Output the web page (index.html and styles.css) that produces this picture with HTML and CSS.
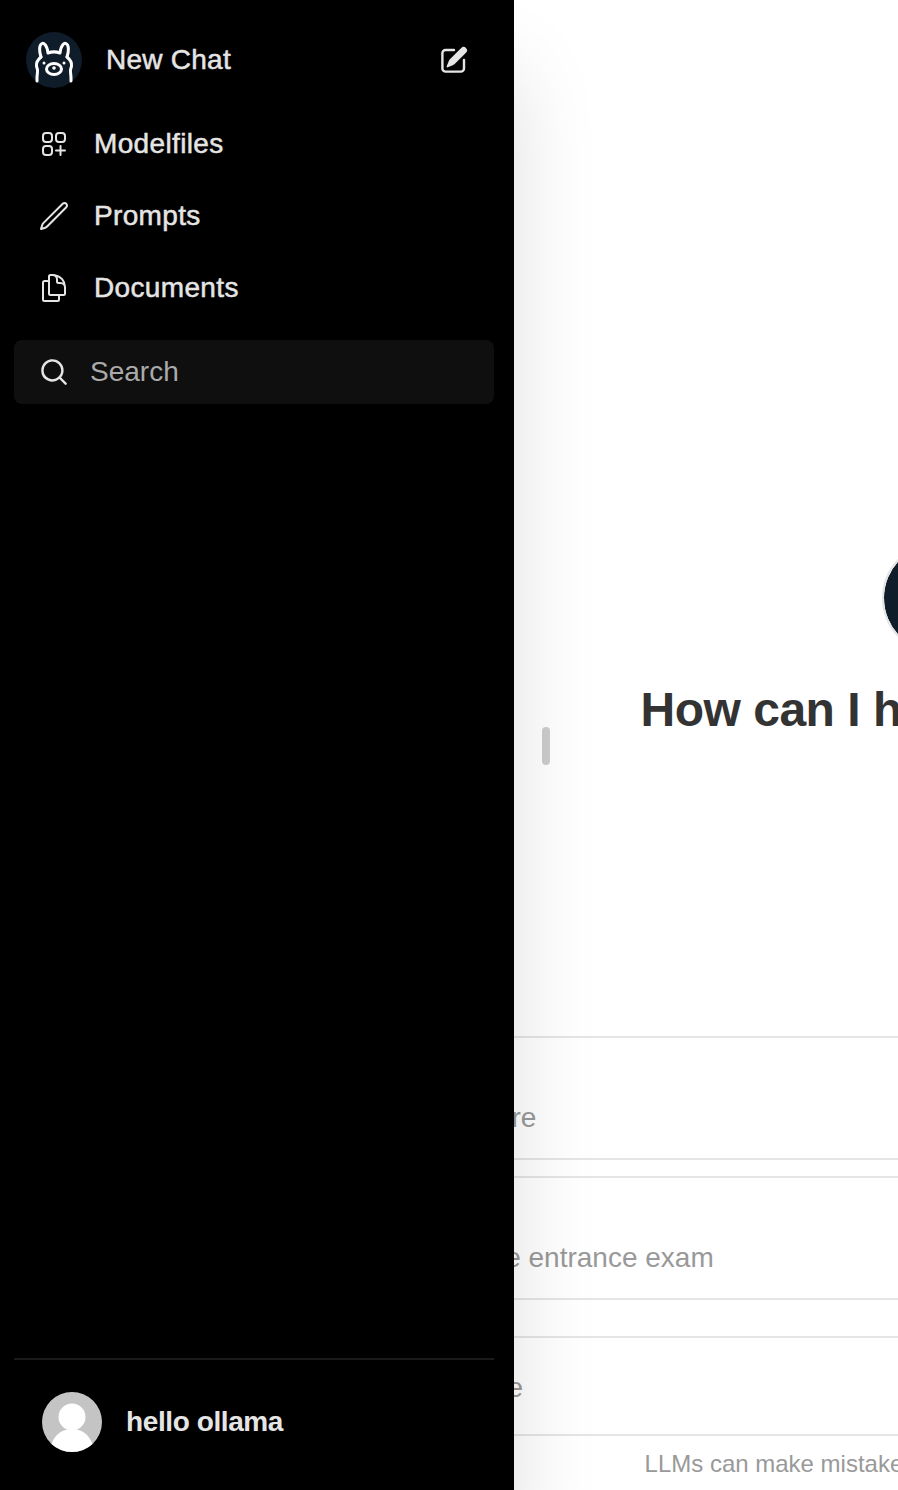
FILE: index.html
```html
<!DOCTYPE html>
<html lang="en">
<head>
    <meta charset="UTF-8">
    <meta name="viewport" content="width=device-width, initial-scale=1.0">
    <title>Ollama Web UI</title>
    <link rel="stylesheet" href="styles.css">
</head>
<body>
    <div class="main">
        <div class="welcome">
            <svg class="logo logo-big" viewBox="0 0 56 56">
                <circle cx="28" cy="28" r="28" fill="#0f1c2a"/>
                <g fill="none" stroke="#fff" stroke-width="3" stroke-linecap="round" stroke-linejoin="round">
                    <path d="M15 25C13 19 13 13 16 11.500c1.500-.8 5 1 6 9.500 4-1.500 8-1.500 12 0 1-8.500 4.500-10.300 6-9.500 3 1.500 3 7.500 1 13.500"/>
                    <path d="M15 25c-3 2.500-5 5.500-4.500 9 .3 2 1.500 3.500 1 6-.4 3-.6 6-.5 9"/>
                    <path d="M41 25c3 2.500 5 5.500 4.500 9-.3 2-1.500 3.500-1 6 .4 3 .6 6 .5 9"/>
                    <ellipse cx="28" cy="37" rx="7.500" ry="5.500"/>
                </g>
                <circle cx="28" cy="36" r="1.800" fill="#fff"/>
                <circle cx="18" cy="31" r="1.500" fill="#fff"/>
                <circle cx="38" cy="31" r="1.500" fill="#fff"/>
            </svg>
            <h1 class="welcome-title">How can I help you today?</h1>
        </div>

        <div class="suggestions">
            <button class="suggestion">
                <span class="suggestion-title">Tell me a fun fact</span>
                <span class="suggestion-text">about the Roman Empire</span>
            </button>
            <button class="suggestion">
                <span class="suggestion-title">Help me study</span>
                <span class="suggestion-text">vocabulary for a college entrance exam</span>
            </button>
        </div>

        <div class="message-box">
            <input class="message-input" type="text" placeholder="Send a Message">
        </div>
        <div class="disclaimer">LLMs can make mistakes. Verify important information.</div>
    </div>

    <div class="drag-handle"></div>

    <div class="sidebar">
        <div class="sidebar-head">
            <svg class="logo" viewBox="0 0 56 56">
                <circle cx="28" cy="28" r="28" fill="#0f1c2a"/>
                <g fill="none" stroke="#fff" stroke-width="3" stroke-linecap="round" stroke-linejoin="round">
                    <path d="M15 25C13 19 13 13 16 11.500c1.500-.8 5 1 6 9.500 4-1.500 8-1.500 12 0 1-8.500 4.500-10.300 6-9.500 3 1.500 3 7.500 1 13.500"/>
                    <path d="M15 25c-3 2.500-5 5.500-4.500 9 .3 2 1.500 3.500 1 6-.4 3-.6 6-.5 9"/>
                    <path d="M41 25c3 2.500 5 5.500 4.500 9-.3 2-1.500 3.500-1 6 .4 3 .6 6 .5 9"/>
                    <ellipse cx="28" cy="37" rx="7.500" ry="5.500"/>
                </g>
                <circle cx="28" cy="36" r="1.800" fill="#fff"/>
                <circle cx="18" cy="31" r="1.500" fill="#fff"/>
                <circle cx="38" cy="31" r="1.500" fill="#fff"/>
            </svg>
            <span class="new-chat">New Chat</span>
            <svg class="edit-icon" viewBox="0 0 20 20" fill="currentColor">
                <path d="M5.433 13.917l1.262-3.155A4 4 0 017.58 9.42l6.92-6.918a2.121 2.121 0 013 3l-6.92 6.918c-.383.383-.84.685-1.343.886l-3.154 1.262a.5.5 0 01-.65-.65z"/>
                <path d="M3.500 5.750c0-.69.56-1.250 1.250-1.250H10A.75.75 0 0010 3H4.750A2.750 2.750 0 002 5.750v9.500A2.750 2.750 0 004.750 18h9.500A2.750 2.750 0 0017 15.250V10a.75.75 0 00-1.500 0v5.250c0 .69-.56 1.250-1.250 1.250h-9.500c-.69 0-1.250-.56-1.250-1.250v-9.500z"/>
            </svg>
        </div>

        <div class="nav">
            <div class="nav-item">
                <svg class="nav-icon" viewBox="0 0 24 24" fill="none" stroke="currentColor" stroke-width="1.500" stroke-linecap="round" stroke-linejoin="round">
                    <path d="M13.500 16.875h3.375m0 0h3.375m-3.375 0V13.500m0 6.750v-3.375M6 10.500h2.250a2.250 2.250 0 002.250-2.250V6a2.250 2.250 0 00-2.250-2.250H6A2.250 2.250 0 003.750 6v2.250A2.250 2.250 0 006 10.500zm0 9.750h2.250A2.250 2.250 0 0010.500 18v-2.250a2.250 2.250 0 00-2.250-2.250H6a2.250 2.250 0 00-2.250 2.250V18A2.250 2.250 0 006 20.250zm9.750-9.750H18a2.250 2.250 0 002.250-2.250V6A2.250 2.250 0 0018 3.750h-2.250A2.250 2.250 0 0013.500 6v2.250a2.250 2.250 0 002.250 2.250z"/>
                </svg>
                <span>Modelfiles</span>
            </div>
            <div class="nav-item">
                <svg class="nav-icon" viewBox="0 0 24 24" fill="none" stroke="currentColor" stroke-width="1.500" stroke-linecap="round" stroke-linejoin="round">
                    <path d="M16.862 4.487l1.687-1.688a1.875 1.875 0 112.652 2.652L6.832 19.820a4.500 4.500 0 01-1.897 1.130l-2.685.8.8-2.685a4.500 4.500 0 011.130-1.897L16.863 4.487z"/>
                </svg>
                <span>Prompts</span>
            </div>
            <div class="nav-item">
                <svg class="nav-icon" viewBox="0 0 24 24" fill="none" stroke="currentColor" stroke-width="1.500" stroke-linecap="round" stroke-linejoin="round">
                    <path d="M15.750 17.250v3.375c0 .621-.504 1.125-1.125 1.125h-9.750a1.125 1.125 0 01-1.125-1.125V7.875c0-.621.504-1.125 1.125-1.125H6.750a9.060 9.060 0 011.500.124m7.500 10.376h3.375c.621 0 1.125-.504 1.125-1.125V11.250c0-4.460-3.243-8.161-7.500-8.876a9.060 9.060 0 00-1.500-.124H9.375c-.621 0-1.125.504-1.125 1.125v3.500m7.500 10.375H9.375a1.125 1.125 0 01-1.125-1.125v-9.250m12 6.625v-1.875a3.375 3.375 0 00-3.375-3.375h-1.500a1.125 1.125 0 01-1.125-1.125v-1.500a3.375 3.375 0 00-3.375-3.375H9.750"/>
                </svg>
                <span>Documents</span>
            </div>
        </div>

        <div class="search">
            <svg class="search-icon" viewBox="0 0 20 20" fill="currentColor">
                <path fill-rule="evenodd" clip-rule="evenodd" d="M9 3.500a5.500 5.500 0 100 11 5.500 5.500 0 000-11zM2 9a7 7 0 1112.452 4.391l3.328 3.329a.75.75 0 11-1.060 1.060l-3.329-3.328A7 7 0 012 9z"/>
            </svg>
            <input class="search-input" type="text" placeholder="Search">
        </div>

        <div class="sidebar-foot">
            <div class="user">
                <svg class="avatar" viewBox="0 0 60 60">
                    <circle cx="30" cy="30" r="30" fill="#c4c4c4"/>
                    <circle cx="30" cy="25" r="13.500" fill="#fff"/>
                    <path d="M9.500 52C13 42 21 37 30 37s17 5 20.500 15A30 30 0 0130 60a30 30 0 01-20.500-8z" fill="#fff"/>
                </svg>
                <span class="user-name">hello ollama</span>
            </div>
        </div>
    </div>
</body>
</html>
```

FILE: styles.css
```css
html, body {
    margin: 0;
    height: 100%;
    overflow: hidden;
}
body {
    position: relative;
    width: 898px;
    height: 1490px;
    font-family: "Liberation Sans", Arial, sans-serif;
    background: white;
}
.main {
    width: 1876px;
    height: 1490px;
    display: flex;
    flex-direction: column;
    box-sizing: border-box;
    padding: 0 188px;
}
.welcome {
    flex: 1;
    display: flex;
    flex-direction: column;
    align-items: center;
    padding-top: 542px;
}
.logo {
    width: 56px;
    height: 56px;
    flex-shrink: 0;
}
.logo-big {
    width: 112px;
    height: 112px;
    box-sizing: border-box;
    border: 2px solid #e5e5e5;
    border-radius: 50%;
}
.welcome-title {
    margin: 28px 0 0;
    padding-right: 2px;
    font-size: 48px;
    line-height: 56px;
    font-weight: 700;
    letter-spacing: -0.5px;
    color: #333;
}
.suggestions {
    display: flex;
    flex-direction: column;
    gap: 16px;
}
.suggestion {
    display: flex;
    flex-direction: column;
    height: 124px;
    box-sizing: border-box;
    padding: 20px 35px;
    border: 2px solid #e5e5e5;
    border-radius: 24px;
    background: transparent;
    font-family: inherit;
    text-align: left;
}
.suggestion-title {
    font-size: 28px;
    line-height: 40px;
    font-weight: 700;
    color: #333;
}
.suggestion-text {
    font-size: 28px;
    line-height: 40px;
    color: #999;
}
.message-box {
    margin-top: 36px;
    height: 100px;
    box-sizing: border-box;
    padding: 4px 123px 0;
    display: flex;
    align-items: center;
    border: 2px solid #e5e5e5;
    border-radius: 24px;
}
.message-input {
    flex: 1;
    border: none;
    outline: none;
    padding: 0;
    background: transparent;
    font-family: inherit;
    font-size: 28px;
}
.message-input::placeholder {
    color: #999;
    opacity: 1;
}
.disclaimer {
    height: 54px;
    padding-right: 4px;
    font-size: 24px;
    line-height: 56px;
    text-align: center;
    color: #999;
}
.drag-handle {
    position: absolute;
    left: 542px;
    top: 727px;
    width: 8px;
    height: 38px;
    border-radius: 4px;
    background: #ccc;
}
.sidebar {
    position: absolute;
    top: 0;
    left: 0;
    width: 514px;
    height: 1490px;
    display: flex;
    flex-direction: column;
    box-sizing: border-box;
    padding: 32px 20px 0 14px;
    background: black;
    color: #e5e5e5;
    box-shadow: 0 70px 80px rgba(0, 0, 0, 0.13);
}
.sidebar-head {
    display: flex;
    align-items: center;
    padding-left: 12px;
}
.new-chat {
    flex: 1;
    margin-left: 24px;
    font-size: 28px;
    font-weight: 500;
    letter-spacing: 0.25px;
    -webkit-text-stroke: 0.5px currentColor;
}
.edit-icon {
    width: 32px;
    height: 32px;
    margin-right: 24px;
}
.nav {
    margin-top: 20px;
}
.nav-item {
    display: flex;
    align-items: center;
    gap: 24px;
    height: 72px;
    padding-left: 24px;
    font-size: 28px;
    font-weight: 500;
    letter-spacing: 0.35px;
    -webkit-text-stroke: 0.5px currentColor;
}
.nav-icon {
    width: 32px;
    height: 32px;
}
.search {
    display: flex;
    align-items: center;
    gap: 20px;
    height: 64px;
    margin-top: 16px;
    padding-left: 24px;
    border-radius: 8px;
    background: #0f0f0f;
}
.search-icon {
    width: 32px;
    height: 32px;
}
.search-input {
    flex: 1;
    min-width: 0;
    border: none;
    outline: none;
    padding: 0;
    background: transparent;
    font-family: inherit;
    font-size: 28px;
    color: #e5e5e5;
}
.search-input::placeholder {
    color: #aaa;
    opacity: 1;
}
.sidebar-foot {
    margin-top: auto;
    padding: 32px 0 38px;
    border-top: 2px solid #1a1a1a;
}
.user {
    display: flex;
    align-items: center;
    gap: 24px;
    padding-left: 28px;
}
.avatar {
    width: 60px;
    height: 60px;
}
.user-name {
    font-size: 28px;
    font-weight: 700;
    letter-spacing: -0.4px;
}
```
